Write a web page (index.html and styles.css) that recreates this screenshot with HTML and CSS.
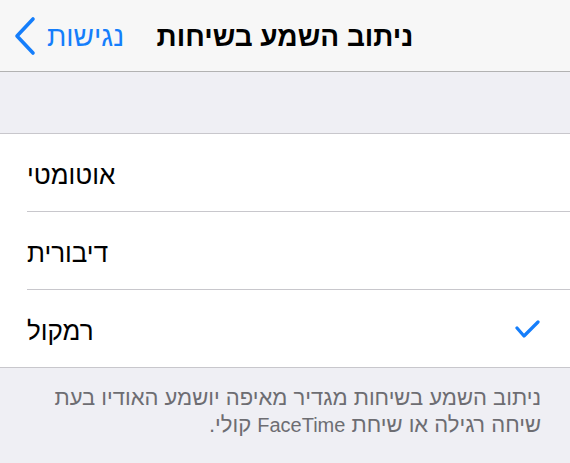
FILE: index.html
```html
<!DOCTYPE html>
<html lang="he">
<head>
<meta charset="utf-8">
<title>ניתוב השמע בשיחות</title>
<link rel="stylesheet" href="styles.css">
</head>
<body>
<header class="nav">
  <a class="back" href="#">
    <svg class="chev" width="24" height="40" viewBox="0 0 24 40" aria-hidden="true">
      <path d="M20 3 L4 20 L20 37" fill="none" stroke="#157efb" stroke-width="3.6" stroke-linecap="round" stroke-linejoin="round"/>
    </svg>
    <span class="back-label" dir="rtl">נגישות</span>
  </a>
  <h1 class="title" dir="rtl">ניתוב השמע בשיחות</h1>
  <div class="nav-end"></div>
</header>
<div class="gap"></div>
<ul class="list">
  <li class="row"><span class="label" dir="rtl">אוטומטי</span></li>
  <li class="row"><span class="label" dir="rtl">דיבורית</span></li>
  <li class="row last"><span class="label" dir="rtl">רמקול</span>
    <svg class="check" width="26" height="20" viewBox="0 0 26 20" aria-hidden="true">
      <path d="M2 8 L9 16 L23 2" fill="none" stroke="#157efb" stroke-width="3.2" stroke-linecap="round" stroke-linejoin="round"/>
    </svg>
  </li>
</ul>
<p class="note" dir="rtl">ניתוב השמע בשיחות מגדיר מאיפה יושמע האודיו בעת<br>שיחה רגילה או שיחת <span class="latin">FaceTime</span> קולי.</p>
</body>
</html>
```
FILE: styles.css
```css
html, body {
  margin: 0;
  padding: 0;
}
body {
  width: 570px;
  height: 463px;
  overflow: hidden;
  background: #efeff4;
  font-family: "Liberation Sans", Arial, sans-serif;
  color: #000;
}
.nav {
  height: 71px;
  background: #f7f7f7;
  border-bottom: 1px solid #b2b2b2;
  display: grid;
  grid-template-columns: 1fr auto 1fr;
  align-items: center;
}
.back {
  display: flex;
  align-items: center;
  gap: 10px;
  padding-left: 13px;
  text-decoration: none;
  color: #157efb;
  justify-self: start;
}
.chev {
  display: block;
}
.back-label {
  font-size: 28px;
  line-height: 1;
  padding-top: 3px;
}
.title {
  margin: 0;
  font-size: 28px;
  font-weight: bold;
  line-height: 1;
  padding-top: 2px;
}
.gap {
  height: 61px;
}
.list {
  list-style: none;
  margin: 0;
  padding: 0 0 0 27px;
  background: #fff;
  border-top: 1px solid #c8c7cc;
  border-bottom: 1px solid #c8c7cc;
}
.row {
  height: 77px;
  display: flex;
  align-items: center;
  justify-content: space-between;
  padding-right: 29px;
  border-bottom: 1px solid #c8c7cc;
}
.row.last {
  border-bottom: none;
}
.label {
  font-size: 26px;
  line-height: 1;
  padding-top: 4px;
}
.check {
  display: block;
  margin-top: 2px;
}
.note {
  margin: 0;
  padding: 16px 29px 0 20px;
  font-size: 22px;
  line-height: 27px;
  color: #6d6d72;
  text-align: right;
}
.latin {
  font-size: 20px;
}
```
